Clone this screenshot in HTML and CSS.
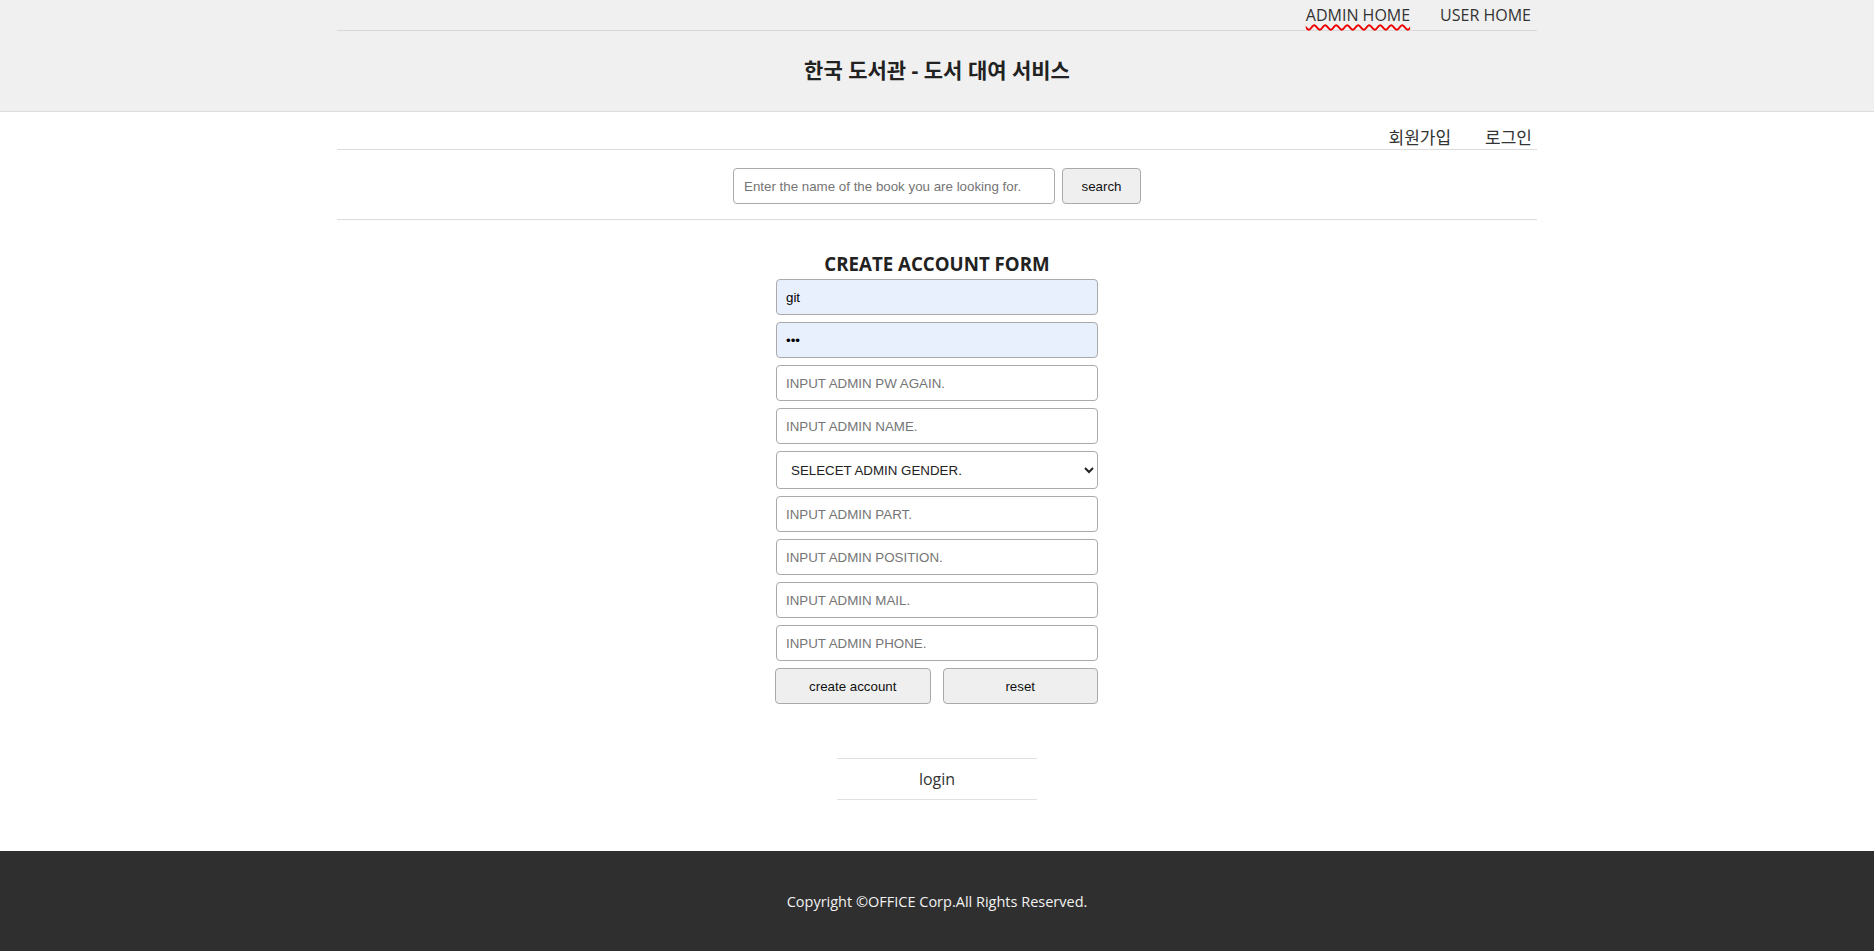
FILE: index.html
```html
<!DOCTYPE html>
<html lang="ko">
<head>
<meta charset="utf-8">
<title>한국 도서관 - 도서 대여 서비스</title>
<link rel="stylesheet" href="styles.css">
</head>
<body>
<header class="site-header">
  <div class="container">
    <nav class="top-nav">
      <a href="#" class="spell">ADMIN HOME</a>
      <a href="#">USER HOME</a>
    </nav>
    <h1 class="site-title">한국 도서관 - 도서 대여 서비스</h1>
  </div>
</header>
<main>
  <div class="container">
    <nav class="member-nav">
      <a href="#">회원가입</a>
      <a href="#">로그인</a>
    </nav>
    <form class="search-bar">
      <input type="text" class="search-input" placeholder="Enter the name of the book you are looking for.">
      <button type="button" class="btn search-btn">search</button>
    </form>
  </div>
  <section class="create">
    <h2 class="create-title">CREATE ACCOUNT FORM</h2>
    <form class="create-form">
      <input type="text" class="field filled" value="git">
      <input type="password" class="field filled" value="abc">
      <input type="password" class="field" placeholder="INPUT ADMIN PW AGAIN.">
      <input type="text" class="field" placeholder="INPUT ADMIN NAME.">
      <select class="field select">
        <option>SELECET ADMIN GENDER.</option>
        <option>M</option>
        <option>W</option>
      </select>
      <input type="text" class="field" placeholder="INPUT ADMIN PART.">
      <input type="text" class="field" placeholder="INPUT ADMIN POSITION.">
      <input type="text" class="field" placeholder="INPUT ADMIN MAIL.">
      <input type="text" class="field" placeholder="INPUT ADMIN PHONE.">
      <div class="btn-row">
        <button type="button" class="btn">create account</button>
        <button type="reset" class="btn">reset</button>
      </div>
    </form>
    <div class="login-link"><a href="#">login</a></div>
  </section>
</main>
<footer class="site-footer">
  <p>Copyright ©OFFICE Corp.All Rights Reserved.</p>
</footer>
</body>
</html>
```

FILE: styles.css
```css
* { box-sizing: border-box; }

body {
  margin: 0;
  font-family: "Open Sans", "Noto Sans CJK KR", sans-serif;
  color: #333;
  background: #fff;
}

a { color: #333; text-decoration: none; }

.container {
  width: 1200px;
  margin: 0 auto;
}

.site-header {
  background: #f0f0f0;
  border-bottom: 1px solid #dcdcdc;
}

.top-nav {
  height: 31px;
  display: flex;
  justify-content: flex-end;
  align-items: center;
  gap: 30px;
  padding: 0 6px 0 0;
  border-bottom: 1px solid #d9d9d9;
  font-size: 16px;
}

.spell {
  text-decoration: underline wavy #e00;
  text-underline-offset: 3px;
  text-decoration-thickness: 1.5px;
}

.site-title {
  margin: 0;
  height: 80px;
  display: flex;
  align-items: center;
  justify-content: center;
  font-size: 21px;
  font-weight: bold;
  color: #222;
  padding-bottom: 4px;
}

.member-nav {
  height: 38px;
  display: flex;
  justify-content: flex-end;
  align-items: flex-end;
  gap: 34px;
  padding-right: 5px;
  border-bottom: 1px solid #dcdcdc;
  font-size: 17px;
  line-height: 22px;
}

.search-bar {
  margin: 0;
  display: flex;
  justify-content: center;
  gap: 7px;
  padding: 18px 0 15px 0;
  border-bottom: 1px solid #dcdcdc;
}

.search-input {
  width: 322px;
  height: 36px;
  border: 1px solid #aaa;
  border-radius: 4px;
  padding: 0 10px;
  font-family: "Liberation Sans", Arial, sans-serif;
  font-size: 13.333px;
  color: #222;
}

.search-input::placeholder, .field::placeholder { color: #757575; }

.btn {
  height: 36px;
  border: 1px solid #aaa;
  border-radius: 4px;
  background: #efefef;
  font-family: "Liberation Sans", Arial, sans-serif;
  font-size: 13.333px;
  color: #111;
}

.search-btn { width: 79px; }

.create {
  display: flex;
  flex-direction: column;
  align-items: center;
}

.create-title {
  margin: 30px 0 1px;
  font-size: 18.7px;
  line-height: 28px;
  font-weight: bold;
  color: #222;
}

.create-form {
  width: 322px;
  display: flex;
  flex-direction: column;
  gap: 7px;
  margin: 0;
}

.field {
  width: 322px;
  height: 36px;
  border: 1px solid #aaa;
  border-radius: 4px;
  padding: 0 9px;
  font-family: "Liberation Sans", Arial, sans-serif;
  font-size: 13.333px;
  color: #000;
  background: #fff;
}

.field.filled { background: #e8f0fe; }

.select {
  height: 38px;
  padding: 0 10px;
  color: #222;
}

.btn-row {
  display: flex;
  gap: 12px;
  margin-left: -1px;
}

.btn-row .btn { width: 156px; }

.login-link {
  width: 200px;
  height: 42px;
  margin: 54px 0 51px;
  border-top: 1px solid #e0e0e0;
  border-bottom: 1px solid #e0e0e0;
  display: flex;
  align-items: center;
  justify-content: center;
  font-size: 16px;
}

.site-footer {
  height: 100px;
  background: #2f2f2f;
  display: flex;
  align-items: center;
  justify-content: center;
}

.site-footer p {
  margin: 0;
  color: #f2f2f2;
  font-size: 14.5px;
}
```
